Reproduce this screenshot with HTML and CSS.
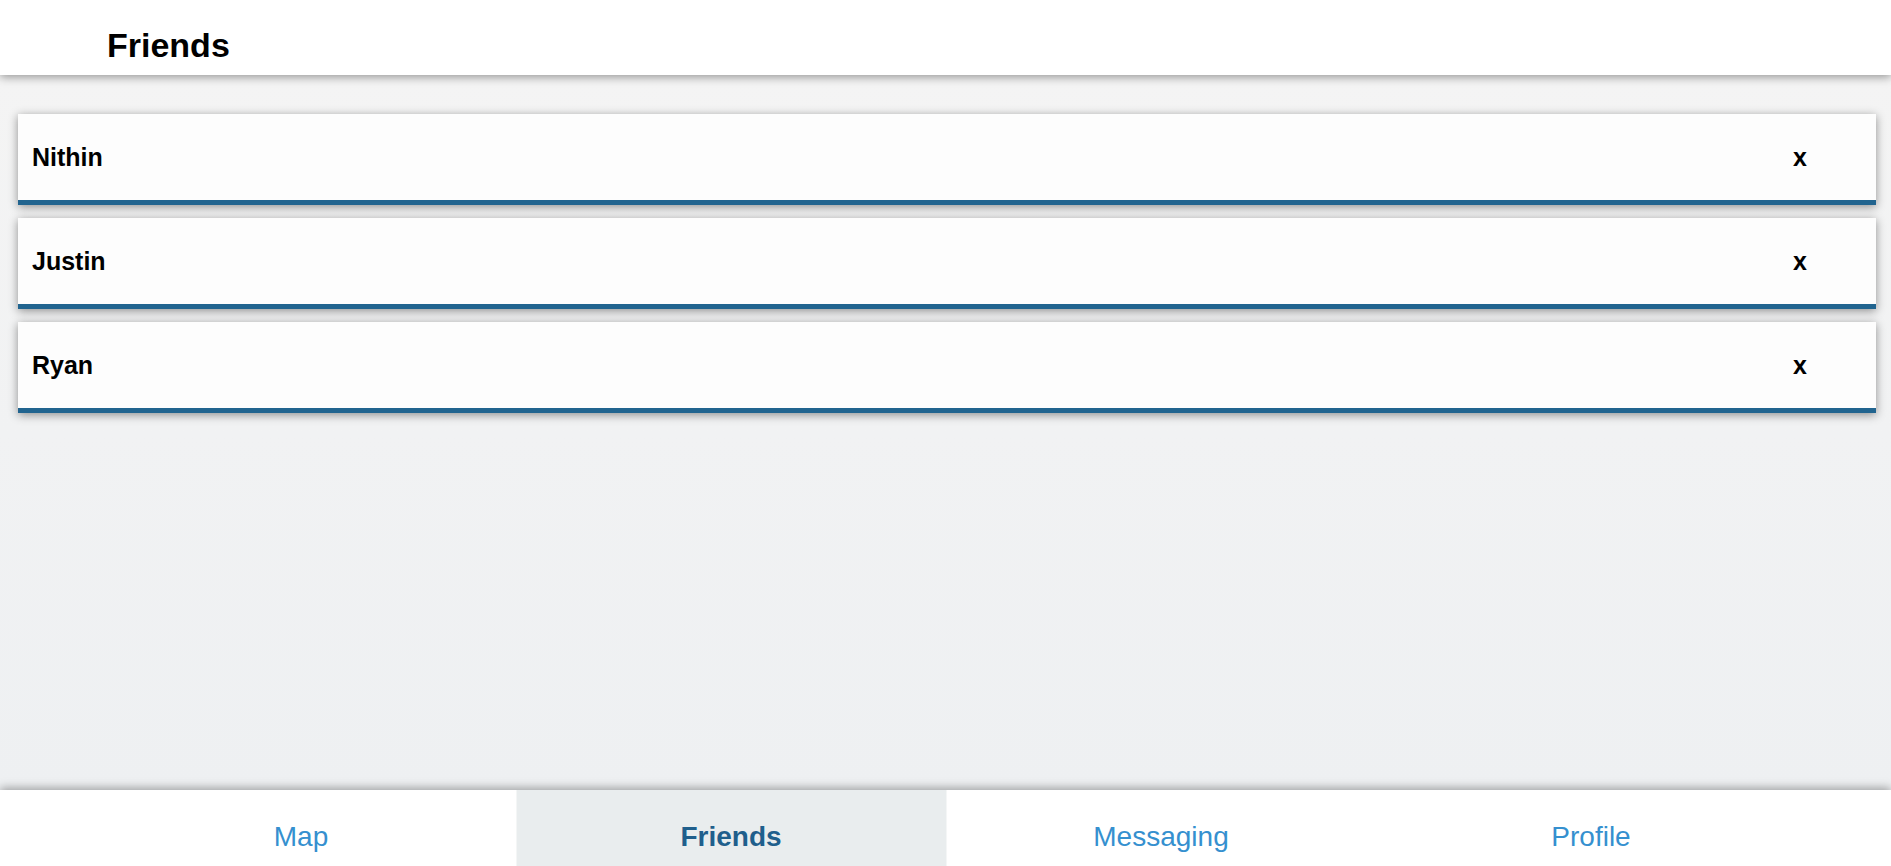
FILE: index.html
```html
<!DOCTYPE html>
<html>
<head>
<meta charset="utf-8">
<link rel="stylesheet" href="styles.css">
</head>
<body>
<div class="app">
  <header class="topbar">
    <h1 class="title">Friends</h1>
  </header>
  <main class="content">
    <div class="card"><span class="name">Nithin</span><span class="remove">x</span></div>
    <div class="card"><span class="name">Justin</span><span class="remove">x</span></div>
    <div class="card"><span class="name">Ryan</span><span class="remove">x</span></div>
  </main>
  <nav class="tabbar">
    <div class="tabs">
      <a class="tab">Map</a>
      <a class="tab active">Friends</a>
      <a class="tab">Messaging</a>
      <a class="tab">Profile</a>
    </div>
  </nav>
</div>
</body>
</html>
```

FILE: styles.css
```css
html, body {
  margin: 0;
  padding: 0;
  height: 100%;
}
body {
  font-family: "Liberation Sans", Arial, sans-serif;
  overflow: hidden;
}
.app {
  display: flex;
  flex-direction: column;
  height: 100vh;
}
.topbar {
  height: 75px;
  box-sizing: border-box;
  background: #ffffff;
  padding: 26px 0 0 107px;
  box-shadow: 0 2px 9px rgba(0, 0, 0, 0.4);
  position: relative;
  z-index: 2;
  flex: none;
}
.title {
  margin: 0;
  font-size: 34px;
  font-weight: bold;
  line-height: normal;
  color: #000;
}
.content {
  flex: 1;
  background: linear-gradient(#f4f4f4, #eef0f2);
  padding: 39px 15px 0 18px;
  display: flex;
  flex-direction: column;
  gap: 13px;
}
.card {
  height: 86px;
  background: #fdfdfd;
  border-bottom: 5px solid #21648f;
  box-shadow: 0 2px 9px rgba(0, 0, 0, 0.42);
  display: flex;
  align-items: center;
  justify-content: space-between;
  padding: 0 69px 0 14px;
  font-size: 25px;
  font-weight: bold;
  color: #000;
}
.tabbar {
  height: 76px;
  flex: none;
  background: #ffffff;
  box-shadow: 0 -2px 9px rgba(0, 0, 0, 0.35);
  position: relative;
  z-index: 2;
}
.tabs {
  max-width: 1720px;
  margin: 0 auto;
  display: grid;
  grid-template-columns: repeat(4, 1fr);
  height: 100%;
  transform: translateX(0.5px);
}
.tab {
  text-align: center;
  padding-top: 31px;
  font-size: 28px;
  color: #3590cf;
  line-height: normal;
}
.tab.active {
  background: #e9edee;
  color: #1f5f8c;
  font-weight: bold;
}
```
